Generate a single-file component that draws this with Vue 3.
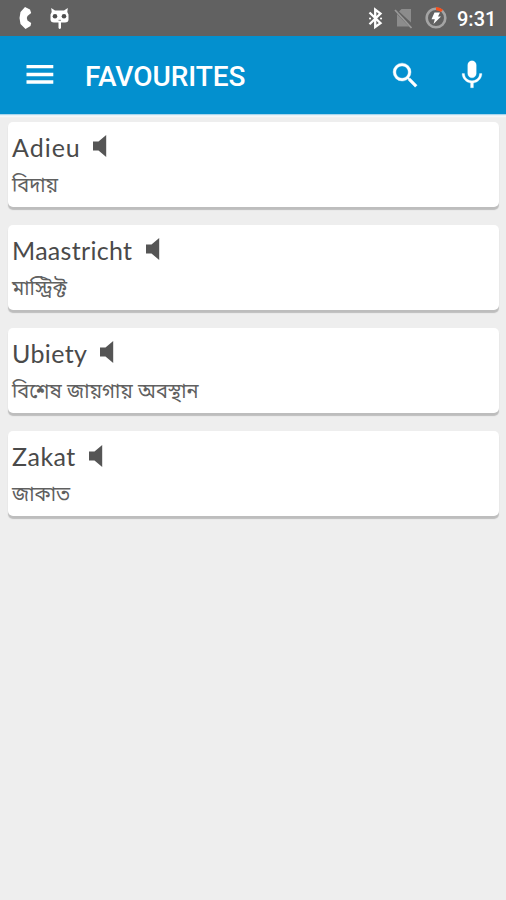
<script setup>
const entries = [
  { word: 'Adieu', meaning: 'বিদায়', width: 80.5, spacing: 1 },
  { word: 'Maastricht', meaning: 'মাস্ট্রিক্ট', width: 133.5, spacing: 0.3 },
  { word: 'Ubiety', meaning: 'বিশেষ জায়গায় অবস্থান', width: 88, spacing: 0.35 },
  { word: 'Zakat', meaning: 'জাকাত', width: 76.5, spacing: 0.5 }
]
</script>

<template>
  <div class="screen">
    <div class="status">
      <svg class="notif" width="80" height="36" viewBox="0 0 80 36">
        <path d="M25 7 30 9.500 31.200 13 27.500 16 26.800 18 27.500 20.500 31.200 23 30.500 26 25.500 29 20.500 24 19.500 18 20.500 12Z" fill="#fff" />
        <path d="M51.200 8 55 10.500H64L67.800 8 67.300 12 68.500 14.500V20Q68 22.500 65 22.500H61V28Q59.700 30 58.500 28V22.500H54Q51 22.500 50.500 20V14.500L51.700 12Z" fill="#fff" />
        <circle cx="55" cy="16.300" r="2.300" fill="#4e4e4e" />
        <circle cx="64" cy="16.300" r="2.300" fill="#4e4e4e" />
        <path d="M58.500 20.300h2.500" stroke="#888" stroke-width="1" />
      </svg>
      <div class="indicators">
        <svg width="86" height="36" viewBox="364 0 86 36">
          <path d="M369.500 12.500 380.500 23.200 375.200 27V9.500L380.500 13.500 369.500 24.200" fill="none" stroke="#fff" stroke-width="2.300" />
          <path d="M370 18.500h.1M381 18.500h.1" stroke="#fff" stroke-width="2" stroke-linecap="round" />
          <path d="M401.500 9H411V22.500L399 11.500ZM397 14 409 26.500H397Z" fill="#8c8c8c" />
          <path d="M395 10 411.500 28" stroke="#999" stroke-width="1.700" />
          <circle cx="436" cy="18" r="9.300" fill="none" stroke="#a4a4a4" stroke-width="2.600" />
          <path d="M436 8.700A9.300 9.300 0 0 1 442 10.900" fill="none" stroke="#f4511e" stroke-width="3.200" />
          <path d="M434.500 12.500H440L438 16.500H441L433.500 24 434.800 19.300H431.500Z" fill="#fff" />
        </svg>
        <span class="clock">9:31</span>
      </div>
    </div>
    <header class="bar">
      <svg class="menu" width="28" height="20" viewBox="0 0 28 20">
        <path d="M.500 1.700H27.300M.500 9.500H27.300M.500 17H27.300" stroke="#fff" stroke-width="3.300" />
      </svg>
      <h1>FAVOURITES</h1>
      <svg class="search" width="33" height="33" viewBox="0 0 24 24">
        <path fill="#fff" stroke="#fff" stroke-width=".3" d="M15.500 14h-.79l-.28-.27A6.471 6.471 0 0 0 16 9.500 6.500 6.500 0 1 0 9.500 16c1.610 0 3.090-.59 4.230-1.570l.27.28v.79l5 4.990L20.490 19l-4.990-5zm-6 0C7.010 14 5 11.990 5 9.500S7.010 5 9.500 5 14 7.010 14 9.500 11.990 14 9.500 14z" />
      </svg>
      <svg class="mic" width="34" height="34" viewBox="0 0 24 24">
        <path fill="#fff" stroke="#fff" stroke-width=".2" d="M12 14c1.660 0 2.990-1.340 2.990-3L15 5c0-1.660-1.340-3-3-3S9 3.340 9 5v6c0 1.660 1.340 3 3 3zm5.300-3c0 3-2.540 5.100-5.300 5.100S6.700 14 6.700 11H5c0 3.410 2.720 6.230 6 6.720V21h2v-3.280c3.280-.48 6-3.300 6-6.720h-1.700z" />
      </svg>
    </header>
    <main>
      <article v-for="e in entries" :key="e.word" class="card">
        <div class="head">
          <span class="word" :style="{ width: e.width + 'px', letterSpacing: e.spacing + 'px' }">{{ e.word }}</span>
          <svg width="14" height="22" viewBox="0 0 14 22">
            <path d="M0 6.500H5.500L13.200 0V22L5.500 15.500H0Z" fill="#555" />
          </svg>
        </div>
        <div class="meaning">{{ e.meaning }}</div>
      </article>
    </main>
  </div>
</template>

<style>
body { background: #eee; }
</style>

<style scoped>
.screen { width: 506px; height: 900px; background: #eee; overflow: hidden; font-family: Roboto, sans-serif; }
.status { height: 36px; background: #616161; display: flex; justify-content: space-between; }
.indicators { display: flex; align-items: center; padding-right: 11px; gap: 7px; }
.clock { color: #fff; font-size: 20px; font-weight: 500; line-height: 36px; padding-top: 2px; width: 38px; white-space: nowrap; }
.bar { height: 78px; background: #0390cf; display: flex; align-items: center; padding: 0 17px 0 26px; box-sizing: border-box; box-shadow: 0 1px 1px #a8d5ec, 0 3px 1px #f5f7f8; }
h1 { margin: 4px 0 0 31px; color: #fff; font-size: 28px; letter-spacing: -0.05px; line-height: 34px; font-weight: 500; flex: 1; }
.search { margin-right: 33px; }
main { padding: 7.500px 7px 0 8px; display: flex; flex-direction: column; gap: 18px; }
.card { height: 85.200px; box-sizing: border-box; background: #fff; border-radius: 5px; box-shadow: 0 2.500px 1px #bdbdbd; padding: 9px 4px 0; }
.head { display: flex; height: 34px; }
.head svg { margin-top: 4.500px; }
.word { font-family: Lato, sans-serif; font-size: 25px; line-height: 33.500px; color: #4a4a4a; white-space: nowrap; }
.meaning { color: #606060; font-family: "Noto Sans", "Noto Sans Bengali", sans-serif; font-size: 20px; line-height: 40px; height: 40px; white-space: nowrap; }
</style>
